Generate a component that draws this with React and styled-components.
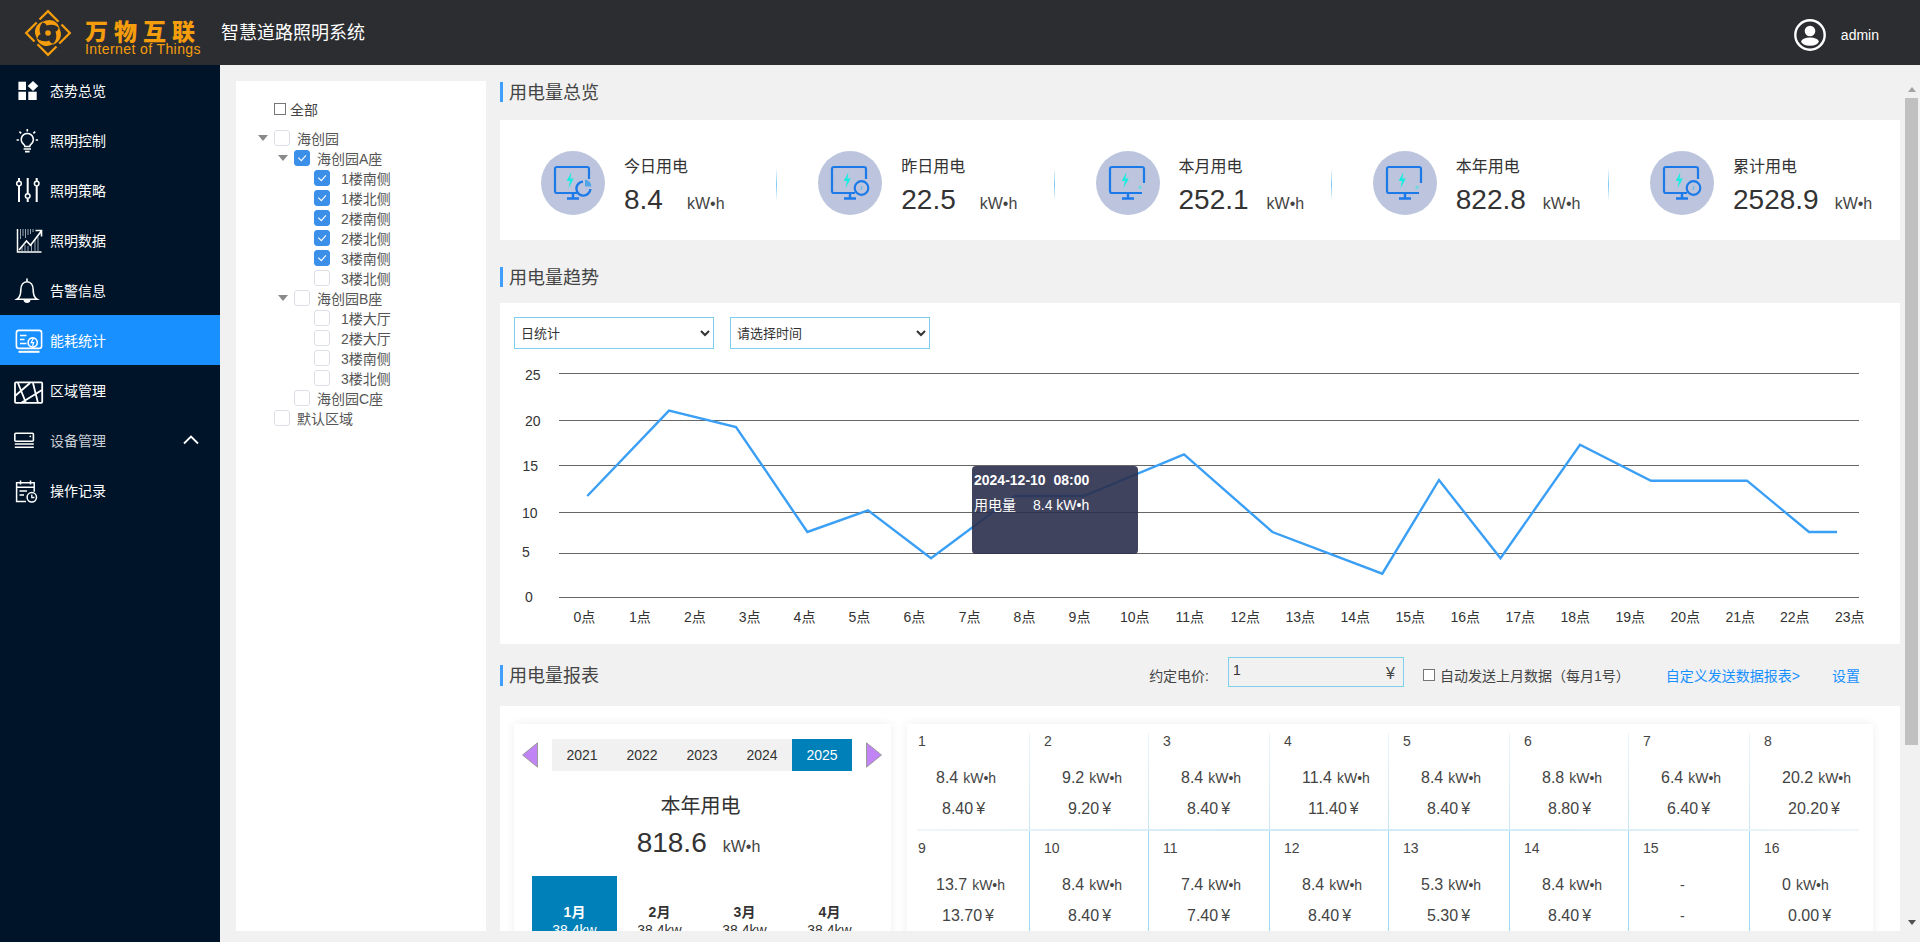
import React from 'react';
import styled, { createGlobalStyle } from 'styled-components';

const FONT = '"Liberation Sans","Noto Sans CJK SC",sans-serif';

const Global = createGlobalStyle`
  html, body { margin: 0; padding: 0; height: 100%; overflow: hidden; background: #f1f1f1; }
  body { font-family: ${FONT}; color: #333; }
  * { box-sizing: border-box; }
`;

const Page = styled.div`
  width: 100%;
  height: 100vh;
  display: flex;
  flex-direction: column;
`;

/* ---------- header ---------- */
const Header = styled.header`
  height: 65px;
  flex: none;
  background: #2c2d31;
  display: flex;
  align-items: center;
  padding: 0 0 0 24px;
  color: #fff;
`;
const LogoText = styled.div`
  margin: 10px 0 0 13px;
  width: 136px;
  color: #f59d0c;
  display: flex;
  flex-direction: column;
`;
const LogoCn = styled.div`
  font-family: "Noto Sans CJK SC", sans-serif;
  font-size: 23px;
  font-weight: 900;
  line-height: 22px;
  letter-spacing: 6px;
  white-space: nowrap;
`;
const LogoEn = styled.div`
  margin-top: 1px;
  font-size: 14px;
  line-height: 15px;
  letter-spacing: 0.4px;
  white-space: nowrap;
`;
const SystemName = styled.h1`
  margin: 0;
  font-size: 18px;
  font-weight: 400;
  line-height: 24px;
`;
const UserBox = styled.div`
  margin-left: auto;
  margin-right: 41px;
  display: flex;
  align-items: center;
  gap: 15px;
  font-size: 14px;
  position: relative;
  top: 2px;
`;

/* ---------- body ---------- */
const Body = styled.div`
  flex: 1;
  min-height: 0;
  display: flex;
`;
const Sidebar = styled.nav`
  width: 220px;
  flex: none;
  background: #001429;
`;
const NavItem = styled.div`
  height: 50px;
  display: flex;
  align-items: center;
  padding-left: 14px;
  gap: 6px;
  font-size: 14px;
  color: ${p => (p.$muted ? '#c9ced4' : '#fff')};
  background: ${p => (p.$active ? '#1890ff' : 'transparent')};
`;
const NavText = styled.span`
  line-height: 20px;
  position: relative;
  top: 1px;
`;
const NavArrow = styled.span`
  margin-left: auto;
  margin-right: 21px;
  display: flex;
`;

const Main = styled.main`
  flex: 1;
  min-width: 0;
  display: flex;
  padding: 16px 2px 11px 16px;
  gap: 14px;
`;

/* ---------- tree ---------- */
const TreePanel = styled.aside`
  width: 250px;
  flex: none;
  background: #fff;
  padding-top: 18px;
  font-size: 14px;
  color: #555;
`;
const AllRow = styled.label`
  display: flex;
  align-items: center;
  height: 20px;
  padding-left: 38px;
  margin-bottom: 9px;
  gap: 4px;
  color: #444;
`;
const NativeCheck = styled.input`
  appearance: none;
  margin: 0;
  width: 12px;
  height: 12px;
  flex: none;
  border: 1px solid #767676;
  border-radius: 0;
  background: #fff;
`;
const TreeRow = styled.div`
  display: flex;
  align-items: center;
  height: 20px;
  padding-left: ${p => 22 + p.$depth * 20}px;
`;
const Caret = styled.span`
  width: 16px;
  flex: none;
  display: flex;
  &::before {
    content: '';
    display: ${p => (p.$open ? 'block' : 'none')};
    border-left: 5px solid transparent;
    border-right: 5px solid transparent;
    border-top: 6px solid #8a8a8a;
  }
`;
const TreeCheck = styled.span`
  width: 16px;
  height: 16px;
  flex: none;
  border-radius: 3px;
  border: 1px solid ${p => (p.$checked ? '#3b8fe8' : '#dcdfe6')};
  background: ${p => (p.$checked ? '#3b8fe8' : '#fff')};
  display: flex;
  align-items: center;
  justify-content: center;
`;
const TreeLabel = styled.span`
  margin-left: ${p => (p.$leaf ? 11 : 7)}px;
  padding-top: 1px;
  line-height: 20px;
  white-space: nowrap;
`;

/* ---------- scrolling content ---------- */
const ScrollArea = styled.section`
  flex: 1;
  min-width: 0;
  position: relative;
`;
const ScrollContent = styled.div`
  height: 100%;
  overflow: hidden;
  padding: 1px 5px 0 0;
`;
const Rail = styled.div`
  position: absolute;
  top: 0;
  right: 0;
  bottom: 0;
  width: 13px;
  display: flex;
  flex-direction: column;
  background: #f1f1f1;
`;
const RailButton = styled.div`
  height: 17px;
  flex: none;
  display: flex;
  align-items: center;
  justify-content: center;
  &::before {
    content: '';
    border-left: 4px solid transparent;
    border-right: 4px solid transparent;
    border-${p => (p.$down ? 'top' : 'bottom')}: 5px solid ${p => (p.$down ? '#505050' : '#a3a3a3')};
  }
`;
const RailTrack = styled.div`
  flex: 1;
`;
const RailThumb = styled.div`
  height: 647px;
  background: #c0c0c0;
`;
const SectionTitle = styled.h2`
  margin: ${p => p.$top || 0}px 0 ${p => p.$bottom || 0}px 0;
  height: 20px;
  border-left: 3px solid #409eff;
  padding-left: 6px;
  font-size: 18px;
  font-weight: 400;
  line-height: 23px;
  color: #444;
`;
const Panel = styled.div`
  width: 1400px;
  background: #fff;
`;

/* stats */
const StatsPanel = styled(Panel)`
  height: 120px;
  padding-top: 31px;
  display: grid;
  grid-template-columns: repeat(5, 277.25px);
`;
const Stat = styled.div`
  position: relative;
  display: flex;
  align-items: flex-start;
  padding-left: 41px;
  gap: 19px;
  &:not(:last-child)::after {
    content: '';
    position: absolute;
    right: 0;
    top: 17px;
    width: 1px;
    height: 33px;
    background: linear-gradient(to bottom, rgba(125,200,240,0), #7dc8f0 50%, rgba(125,200,240,0));
  }
`;
const StatCircle = styled.div`
  width: 64px;
  height: 64px;
  flex: none;
  border-radius: 50%;
  background: #bcc5dd;
`;
const StatInfo = styled.div`
  padding-top: 4px;
`;
const StatLabel = styled.div`
  font-size: 16px;
  line-height: 24px;
  color: #333;
`;
const StatValueRow = styled.div`
  margin-top: 3px;
  display: flex;
  align-items: baseline;
  line-height: 36px;
`;
const StatValue = styled.span`
  font-size: 28px;
  color: #333;
`;
const StatUnit = styled.span`
  font-size: 16px;
  color: #444;
  margin-left: ${p => p.$gap}px;
`;

/* trend */
const TrendPanel = styled(Panel)`
  height: 341px;
  padding-top: 14px;
`;
const Selects = styled.div`
  display: flex;
  gap: 16px;
  padding-left: 14px;
  height: 32px;
`;
const Select = styled.select`
  width: 200px;
  height: 32px;
  border: 1px solid #7dcdf0;
  border-radius: 0;
  background: #fff;
  color: #333;
  font-size: 13px;
  font-family: ${FONT};
  padding-left: 2px;
  outline: none;
`;
const ChartWrap = styled.div`
  position: relative;
  margin-top: 11px;
  height: 284px;
`;
const ChartSvg = styled.svg`
  display: block;
  font-family: ${FONT};
  font-size: 14px;
`;
const Tip = styled.div`
  position: absolute;
  left: 472px;
  top: 105.5px;
  width: 166px;
  height: 88px;
  border-radius: 4px;
  background: rgba(43, 47, 77, 0.9);
  color: #fff;
  padding: 4px 2px;
  font-size: 14px;
  line-height: 20px;
`;
const TipTitle = styled.div`
  font-weight: 700;
  white-space: pre;
`;
const TipRow = styled.div`
  margin-top: 5px;
  display: flex;
  gap: 17px;
`;

/* report */
const ReportHead = styled.div`
  width: 1400px;
  height: 30px;
  margin: 16px 0;
  display: flex;
  align-items: center;
  padding-right: 40px;
`;
const ReportTitle = styled(SectionTitle)`
  height: 21px;
`;
const Controls = styled.div`
  margin-left: auto;
  display: flex;
  align-items: center;
  font-size: 14px;
  color: #444;
`;
const PriceLabel = styled.span`
  margin-right: 19px;
  white-space: nowrap;
`;
const PriceBox = styled.div`
  position: relative;
  width: 176px;
  height: 30px;
  top: -3px;
  margin-right: 19px;
`;
const PriceInput = styled.input`
  width: 100%;
  height: 100%;
  border: 1px solid #80cef0;
  background: transparent;
  padding: 0 4px 5px 4px;
  font-size: 14px;
  font-family: ${FONT};
  color: #333;
  outline: none;
`;
const PriceSuffix = styled.span`
  position: absolute;
  right: 9px;
  top: 8px;
  font-size: 16px;
  line-height: 18px;
`;
const AutoLabel = styled.label`
  display: flex;
  align-items: center;
  gap: 5px;
  margin-right: 36px;
  white-space: nowrap;
`;
const Link = styled.a`
  color: #1890ff;
  white-space: nowrap;
  margin-left: ${p => p.$left || 0}px;
`;
const ReportPanel = styled(Panel)`
  height: 447px;
  padding: 18px 27px 0 14px;
  display: flex;
  gap: 16px;
  align-items: flex-start;
`;
const Card = styled.div`
  background: #fff;
  box-shadow: 0 0 10px rgba(0, 0, 0, 0.07);
  height: 400px;
`;
const YearCard = styled(Card)`
  width: 377px;
  flex: none;
  padding-top: 15px;
`;
const YearRow = styled.div`
  display: flex;
  align-items: center;
  padding-left: 8px;
  gap: 14px;
`;
const YearTabs = styled.div`
  width: 300px;
  display: grid;
  grid-template-columns: repeat(5, 60px);
  background: #f1f1f1;
`;
const YearTab = styled.div`
  height: 32px;
  line-height: 32px;
  text-align: center;
  font-size: 14px;
  color: ${p => (p.$active ? '#fff' : '#333')};
  background: ${p => (p.$active ? '#0080b8' : 'transparent')};
`;
const YearTotal = styled.div`
  margin-top: 21px;
  text-align: center;
`;
const YearTotalLabel = styled.div`
  font-size: 20px;
  line-height: 28px;
  padding-right: 4px;
  color: #333;
`;
const YearTotalValue = styled.div`
  margin-top: 5px;
  display: flex;
  justify-content: center;
  align-items: baseline;
  gap: 16px;
  line-height: 36px;
  padding-right: 8px;
`;
const Months = styled.div`
  margin-top: 11px;
  padding-left: 18px;
  display: grid;
  grid-template-columns: repeat(4, 85px);
`;
const Month = styled.div`
  height: 80px;
  padding-top: 27px;
  text-align: center;
  font-size: 14px;
  line-height: 18px;
  color: ${p => (p.$active ? '#fff' : '#333')};
  background: ${p => (p.$active ? '#0080b8' : 'transparent')};
`;
const MonthName = styled.div`
  font-weight: 700;
`;
const DaysCard = styled(Card)`
  width: 966px;
  flex: none;
  padding: 9px 0 0 10px;
`;
const DaysGrid = styled.div`
  display: grid;
  grid-template-columns: 112px 119px 121px 119px 121px 119px 121px 110px;
  grid-template-rows: 96px 2px auto;
`;
const DayRule = styled.div`
  grid-column: 1 / -1;
  background: linear-gradient(to right, #f1f5f8, #cdeaf8 35%, #d2ecf9 65%, #f1f5f8);
`;
const Day = styled.div`
  padding-left: ${p => (p.$first ? 1 : 14)}px;
  padding-top: ${p => (p.$lower ? 9 : 0)}px;
  height: ${p => (p.$lower ? 120 : 96)}px;
  border-left: ${p => (p.$first ? '0' : '1px solid')};
  border-image: ${p =>
    p.$first
      ? 'none'
      : p.$lower
      ? 'linear-gradient(to bottom, #9fd8f3, #9fd8f3 85%, #e4f3fb) 1'
      : 'linear-gradient(to bottom, #eef5f9, #c8e5f5) 1'};
`;
const DayNum = styled.div`
  height: 16px;
  font-size: 14px;
  line-height: 16px;
  color: #444;
`;
const DayValue = styled.div`
  margin-top: 19px;
  height: 20px;
  line-height: 20px;
  font-size: ${p => (p.$dash ? 14 : 16)}px;
  color: #444;
  white-space: nowrap;
  padding-left: ${p => (p.$dash ? 37 : 18)}px;
`;
const DayCost = styled.div`
  margin-top: 11px;
  height: 20px;
  line-height: 20px;
  font-size: ${p => (p.$dash ? 14 : 16)}px;
  color: #444;
  white-space: nowrap;
  padding-left: ${p => (p.$dash ? 37 : 24)}px;
`;
const DayUnit = styled.span`
  font-size: 14px;
  margin-left: 5px;
`;
const Yen = styled.span`
  margin-left: 3px;
`;

/* ---------- icons ---------- */
const W = '#fff';
const NavIcon = ({ children }) => (
  <svg width="30" height="30" viewBox="0 0 30 30" fill="none" stroke={W} strokeWidth="1.6" style={{ flex: 'none' }}>
    {children}
  </svg>
);
const Icons = {
  overview: (
    <NavIcon>
      <g fill={W} stroke="none">
        <rect x="4.4" y="6.7" width="7.6" height="8.3" />
        <path d="M19 6l5.3 5-5.3 5-5.3-5z" />
        <rect x="4.4" y="16.7" width="7.6" height="8.3" />
        <rect x="14.3" y="16.7" width="8.4" height="8.3" />
      </g>
    </NavIcon>
  ),
  bulb: (
    <NavIcon>
      <path d="M13.3 8.5a6 6 0 0 0-3.6 10.8c.8.6 1.2 1.3 1.2 2.2h4.8c0-.9.4-1.6 1.2-2.2a6 6 0 0 0-3.6-10.8z" />
      <path d="M13.3 4v2.5M5.4 6.6l1.8 1.8M21.2 6.6l-1.8 1.8M2.6 15h2.3M21.7 15H24M9.6 24h7.4M11 26.6h4.6" />
    </NavIcon>
  ),
  sliders: (
    <NavIcon>
      <path d="M5 3v3.4M5 11v16M13.7 3v15.5M13.7 24v3M22.7 3v3.4M22.7 11v16" strokeWidth="2" />
      <circle cx="5" cy="8.6" r="2.3" strokeWidth="1.5" />
      <circle cx="13.7" cy="21" r="2.3" strokeWidth="1.5" />
      <circle cx="22.7" cy="8.6" r="2.3" strokeWidth="1.5" />
    </NavIcon>
  ),
  data: (
    <NavIcon>
      <path d="M3.5 4v23H27.5" strokeWidth="1.5" />
      <path d="M6.5 4v10M9 4v7M11.5 4v9M14 4v6M16.5 4v5M19 4v3M8 21v5M11 20v6M14 21v5M17.5 19v7M21 15v11M24 12v14" strokeWidth="1" stroke="#9aa3ad" />
      <path d="M5 25l7.5-9 4 4.3L27 6.5M21.5 5.5h6v6" strokeWidth="1.6" />
    </NavIcon>
  ),
  bell: (
    <NavIcon>
      <path d="M3 24.3c2.6-1.6 3.8-4.6 3.8-9.3 0-5.2 2.6-8.3 6.2-8.3s6.2 3.1 6.2 8.3c0 4.7 1.2 7.7 3.8 9.3z" />
      <path d="M13 3.5v3" />
      <path d="M10.2 25a2.9 2.9 0 0 0 5.6 0" fill={W} />
    </NavIcon>
  ),
  energy: (
    <NavIcon>
      <rect x="2.4" y="5.4" width="25.2" height="18" rx="2.5" />
      <path d="M4.5 26.8h21" strokeWidth="2" />
      <path d="M6 10.5h6.5M6 14.5h4.5M6 18.5h6.5" />
      <circle cx="18.7" cy="17.5" r="4.6" />
      <path d="M19.5 13l-2.3 4.6h2.4l-1 3.4" strokeWidth="1.2" />
    </NavIcon>
  ),
  area: (
    <NavIcon>
      <rect x="1" y="7.4" width="27.2" height="20.4" rx="1" strokeWidth="1.8" />
      <path d="M4 8l8 20M19 8l5 20M1 21L16 8M7 28l21-13" strokeWidth="1.8" />
    </NavIcon>
  ),
  device: (
    <NavIcon>
      <rect x="0.8" y="8.2" width="18.6" height="8" rx="1" />
      <path d="M0.8 19h19M0.8 22.3h19" />
      <circle cx="16.3" cy="11.3" r="0.9" fill={W} stroke="none" />
    </NavIcon>
  ),
  log: (
    <NavIcon>
      <path d="M12 26.4H2.6V7.8h17.6v9" strokeWidth="1.5" />
      <path d="M6.5 5.5v4M16.5 5.5v4M2.6 12.2h17.6M5.5 16h7.5M5.5 20h4.5" strokeWidth="1.5" />
      <circle cx="17.8" cy="22.3" r="4.7" strokeWidth="1.5" />
      <path d="M17.8 19.5v3h2.6" strokeWidth="1.3" />
    </NavIcon>
  ),
};

const ORANGE = '#f59d0c';
const Logo = () => (
  <svg width="48" height="48" viewBox="0 0 48 48" style={{ flex: 'none' }} fill="none">
    {[0, 90, 180, 270].map(r => (
      <g key={r} transform={`rotate(${r} 24 24)`}>
        <path d="M15.5 10.5L24 2.2L34.5 12.7" stroke={ORANGE} strokeWidth="2.3" />
        <path d="M18.5 13.4C24.5 8.6 33.5 11 36 20C32.5 15.8 27.5 14.6 22.6 16.6C22.6 15.2 21 13.9 18.5 13.4z" fill={ORANGE} />
      </g>
    ))}
    <circle cx="24" cy="24" r="2.8" fill={ORANGE} />
  </svg>
);

const UserIcon = () => (
  <svg width="32" height="32" viewBox="0 0 32 32" fill="none">
    <circle cx="16" cy="16" r="14.7" stroke="#fff" strokeWidth="2.4" />
    <circle cx="16" cy="12" r="5.3" fill="#fff" />
    <ellipse cx="16" cy="22.6" rx="8.8" ry="4.2" fill="#fff" />
  </svg>
);

const StatGlyph = ({ kind }) => (
  <svg width="64" height="64" viewBox="0 0 64 64" fill="none">
    <path
      d={kind === 'dot' ? 'M28 42H16a2 2 0 0 1-2-2V18a2 2 0 0 1 2-2h30a2 2 0 0 1 2 2v14M46 42H28' : 'M37 42H16a2 2 0 0 1-2-2V18a2 2 0 0 1 2-2h30a2 2 0 0 1 2 2v10'}
      stroke="#1c7ae8"
      strokeWidth="2.2"
    />
    <path d="M32 42v5M26 47.5h12" stroke="#1c7ae8" strokeWidth="2.4" />
    <path d="M30.5 21l-4.8 9h3.3l-1.6 7.5 5.4-10h-3.4z" fill="#16ecdf" />
    {kind === 'pie' && (
      <>
        <path d="M42 30.6a7 7 0 1 0 7.4 7.4" stroke="#1c7ae8" strokeWidth="2.4" />
        <path d="M44 28.5a7 7 0 0 1 6.4 7h-6.4z" fill="#52a6e8" />
      </>
    )}
    {kind === 'ring' && (
      <>
        <circle cx="43.5" cy="37" r="6.8" stroke="#1c7ae8" strokeWidth="2.2" />
        <path d="M44 35l-1 4" stroke="#52b8d8" strokeWidth="1" />
      </>
    )}
    {kind === 'dot' && <circle cx="44" cy="36.5" r="1.7" fill="#6fd8e0" />}
  </svg>
);

const TreeTick = () => (
  <svg width="10" height="8" viewBox="0 0 10 8" fill="none">
    <path d="M1.3 3.6l3 3L9 1.3" stroke="#fff" strokeWidth="1.1" />
  </svg>
);

const Triangle = ({ right }) => (
  <svg width="16" height="26" viewBox="0 0 16 26" style={{ flex: 'none' }}>
    <path d={right ? 'M.5.8L15.5 13 .5 25.2z' : 'M15.5.8L.5 13l15 12.2z'} fill="#c084f5" stroke="#9b9b9b" strokeWidth="1" />
  </svg>
);

/* ---------- data ---------- */
const nav = [
  ['overview', '态势总览'],
  ['bulb', '照明控制'],
  ['sliders', '照明策略'],
  ['data', '照明数据'],
  ['bell', '告警信息'],
  ['energy', '能耗统计', { active: true }],
  ['area', '区域管理'],
  ['device', '设备管理', { muted: true, arrow: true }],
  ['log', '操作记录'],
];
const tree = [
  [0, '海创园', true, false, false],
  [1, '海创园A座', true, true, false],
  [2, '1楼南侧', false, true, true],
  [2, '1楼北侧', false, true, true],
  [2, '2楼南侧', false, true, true],
  [2, '2楼北侧', false, true, true],
  [2, '3楼南侧', false, true, true],
  [2, '3楼北侧', false, false, true],
  [1, '海创园B座', true, false, false],
  [2, '1楼大厅', false, false, true],
  [2, '2楼大厅', false, false, true],
  [2, '3楼南侧', false, false, true],
  [2, '3楼北侧', false, false, true],
  [1, '海创园C座', false, false, false],
  [0, '默认区域', false, false, false],
];
const stats = [
  ['今日用电', '8.4', 24, 'pie'],
  ['昨日用电', '22.5', 24, 'ring'],
  ['本月用电', '252.1', 18, 'dot'],
  ['本年用电', '822.8', 17, 'dot'],
  ['累计用电', '2528.9', 16, 'ring'],
];
const grid = [
  [373.5, 525, 380, '25'],
  [420.5, 525, 426, '20'],
  [465.5, 522.5, 471, '15'],
  [512.5, 522, 518, '10'],
  [553.5, 522, 557, '5'],
  [597.5, 525, 602, '0'],
];
const xs = [573.5, 629, 684, 738.7, 793.6, 848.5, 903.4, 958.7, 1013.6, 1068.6, 1120, 1175.5, 1230.5, 1285.5, 1340.5, 1395.5, 1450.5, 1505.5, 1560.5, 1615.5, 1670.5, 1725.5, 1780, 1835];
const line = [
  [587.3, 496], [669, 410.7], [736, 427], [807.4, 532], [868, 510.3], [931, 558.3], [1014.5, 496], [1083.7, 496],
  [1184, 454.3], [1272.4, 532], [1382.3, 573.7], [1439, 480], [1500.5, 558.3], [1580, 444.7], [1651, 480.7],
  [1747, 480.7], [1809, 532], [1837, 532],
];
const row1 = [
  ['1', '8.4', '8.40'], ['2', '9.2', '9.20'], ['3', '8.4', '8.40'], ['4', '11.4', '11.40'],
  ['5', '8.4', '8.40'], ['6', '8.8', '8.80'], ['7', '6.4', '6.40'], ['8', '20.2', '20.20'],
];
const row2 = [
  ['9', '13.7', '13.70'], ['10', '8.4', '8.40'], ['11', '7.4', '7.40'], ['12', '8.4', '8.40'],
  ['13', '5.3', '5.30'], ['14', '8.4', '8.40'], ['15', null, null], ['16', '0', '0.00'],
];

const DayCell = ({ d, first, lower }) => (
  <Day $first={first} $lower={lower}>
    <DayNum>{d[0]}</DayNum>
    {d[1] === null ? (
      <>
        <DayValue $dash>-</DayValue>
        <DayCost $dash>-</DayCost>
      </>
    ) : (
      <>
        <DayValue>{d[1]}<DayUnit>kW•h</DayUnit></DayValue>
        <DayCost>{d[2]}<Yen>¥</Yen></DayCost>
      </>
    )}
  </Day>
);

export default function App() {
  return (
    <Page>
      <Global />
      <Header>
        <Logo />
        <LogoText>
          <LogoCn>万物互联</LogoCn>
          <LogoEn>Internet of Things</LogoEn>
        </LogoText>
        <SystemName>智慧道路照明系统</SystemName>
        <UserBox>
          <UserIcon />
          <span>admin</span>
        </UserBox>
      </Header>
      <Body>
        <Sidebar>
          {nav.map(([icon, text, o = {}]) => (
            <NavItem key={text} $active={o.active} $muted={o.muted}>
              {Icons[icon]}
              <NavText>{text}</NavText>
              {o.arrow && (
                <NavArrow>
                  <svg width="16" height="10" viewBox="0 0 16 10" fill="none">
                    <path d="M1 8.5l7-7 7 7" stroke="#fff" strokeWidth="1.8" />
                  </svg>
                </NavArrow>
              )}
            </NavItem>
          ))}
        </Sidebar>
        <Main>
          <TreePanel>
            <AllRow>
              <NativeCheck type="checkbox" readOnly />
              全部
            </AllRow>
            {tree.map(([depth, label, open, checked, leaf], i) => (
              <TreeRow key={i} $depth={depth}>
                <Caret $open={open} />
                <TreeCheck $checked={checked}>{checked && <TreeTick />}</TreeCheck>
                <TreeLabel $leaf={leaf}>{label}</TreeLabel>
              </TreeRow>
            ))}
          </TreePanel>
          <ScrollArea>
            <ScrollContent>
              <SectionTitle $bottom={18}>用电量总览</SectionTitle>
              <StatsPanel>
                {stats.map(([label, value, gap, kind]) => (
                  <Stat key={label}>
                    <StatCircle><StatGlyph kind={kind} /></StatCircle>
                    <StatInfo>
                      <StatLabel>{label}</StatLabel>
                      <StatValueRow>
                        <StatValue>{value}</StatValue>
                        <StatUnit $gap={gap}>kW•h</StatUnit>
                      </StatValueRow>
                    </StatInfo>
                  </Stat>
                ))}
              </StatsPanel>

              <SectionTitle $top={27} $bottom={16}>用电量趋势</SectionTitle>
              <TrendPanel>
                <Selects>
                  <Select defaultValue="day"><option value="day">日统计</option></Select>
                  <Select defaultValue="t"><option value="t">请选择时间</option></Select>
                </Selects>
                <ChartWrap>
                  <ChartSvg width="1400" height="284" viewBox="500 360 1400 284">
                    {grid.map(([y, x, by, t]) => (
                      <g key={t}>
                        <line x1="559" x2="1859" y1={y} y2={y} stroke="#666" strokeWidth="1" />
                        <text x={x} y={by} fill="#333">{t}</text>
                      </g>
                    ))}
                    <polyline points={line.map(p => p.join(',')).join(' ')} fill="none" stroke="#3a9ff5" strokeWidth="2.4" />
                    {xs.map((x, i) => (
                      <text key={i} x={x} y="622" fill="#333">{i}点</text>
                    ))}
                  </ChartSvg>
                  <Tip>
                    <TipTitle>{'2024-12-10  08:00'}</TipTitle>
                    <TipRow><span>用电量</span><span>8.4 kW•h</span></TipRow>
                  </Tip>
                </ChartWrap>
              </TrendPanel>

              <ReportHead>
                <ReportTitle>用电量报表</ReportTitle>
                <Controls>
                  <PriceLabel>约定电价:</PriceLabel>
                  <PriceBox>
                    <PriceInput defaultValue="1" />
                    <PriceSuffix>¥</PriceSuffix>
                  </PriceBox>
                  <AutoLabel>
                    <NativeCheck type="checkbox" readOnly />
                    自动发送上月数据（每月1号）
                  </AutoLabel>
                  <Link>自定义发送数据报表&gt;</Link>
                  <Link $left={32}>设置</Link>
                </Controls>
              </ReportHead>
              <ReportPanel>
                <YearCard>
                  <YearRow>
                    <Triangle />
                    <YearTabs>
                      {['2021', '2022', '2023', '2024', '2025'].map(y => (
                        <YearTab key={y} $active={y === '2025'}>{y}</YearTab>
                      ))}
                    </YearTabs>
                    <Triangle right />
                  </YearRow>
                  <YearTotal>
                    <YearTotalLabel>本年用电</YearTotalLabel>
                    <YearTotalValue>
                      <StatValue>818.6</StatValue>
                      <StatUnit $gap={0}>kW•h</StatUnit>
                    </YearTotalValue>
                  </YearTotal>
                  <Months>
                    {['1月', '2月', '3月', '4月'].map((m, i) => (
                      <Month key={m} $active={i === 0}>
                        <MonthName>{m}</MonthName>
                        <div>38.4kw</div>
                      </Month>
                    ))}
                  </Months>
                </YearCard>
                <DaysCard>
                  <DaysGrid>
                    {row1.map((d, i) => <DayCell key={d[0]} d={d} first={i === 0} />)}
                    <DayRule />
                    {row2.map((d, i) => <DayCell key={d[0]} d={d} first={i === 0} lower />)}
                  </DaysGrid>
                </DaysCard>
              </ReportPanel>
            </ScrollContent>
            <Rail>
              <RailButton />
              <RailThumb />
              <RailTrack />
              <RailButton $down />
            </Rail>
          </ScrollArea>
        </Main>
      </Body>
    </Page>
  );
}
